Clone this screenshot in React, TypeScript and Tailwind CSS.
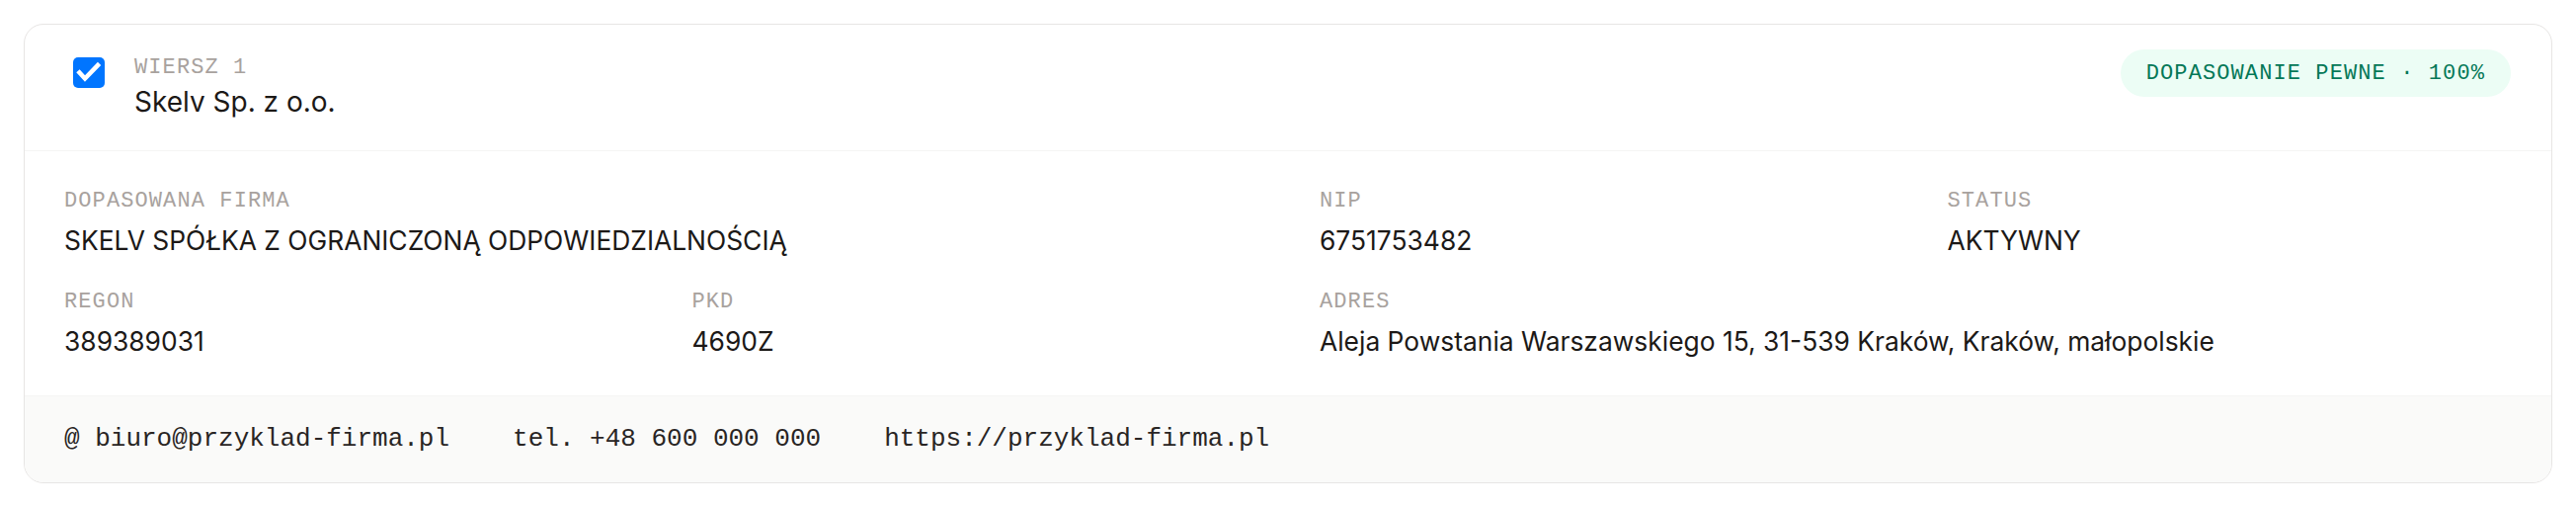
const mono = "font-['Liberation_Mono',monospace]";
const sans = "font-['Inter',sans-serif]";

function Label({ children }: { children: React.ReactNode }) {
  return (
    <div className={`${mono} text-[22px] leading-[28px] tracking-[1.1px] uppercase text-[#a8a29e]`}>
      {children}
    </div>
  );
}

function Value({ children }: { children: React.ReactNode }) {
  return <div className={`${sans} mt-[7px] text-[26.4px] leading-[36px] text-[#1c1917]`}>{children}</div>;
}

function Field({ label, value, span }: { label: string; value: string; span?: boolean }) {
  return (
    <div className={span ? "col-span-2" : ""}>
      <Label>{label}</Label>
      <Value>{value}</Value>
    </div>
  );
}

function CheckBox() {
  return (
    <div className="mt-[3px] flex h-[31px] w-[32px] shrink-0 items-center justify-center rounded-[5px] bg-[#0075ff]">
      <svg width="32" height="31" viewBox="0 0 32 31" fill="none">
        <path d="M6.5 15.5 L12 21.5 L25 8" stroke="white" strokeWidth="4.6" strokeLinecap="square" />
      </svg>
    </div>
  );
}

export default function App() {
  return (
    <div className="min-h-screen bg-white p-[24px]">
      <div className="overflow-hidden rounded-[20px] border border-[#e7e5e4] bg-white">
        {/* header */}
        <div className="flex h-[128px] items-start justify-between border-b border-[#f5f5f4] pl-[49px] pr-[41px] pt-[25px]">
          <div className="flex items-start gap-[30px] pt-[5px]">
            <CheckBox />
            <div>
              <Label>Wiersz 1</Label>
              <div className={`${sans} text-[28px] leading-[40px] text-[#1c1917]`}>Skelv Sp. z o.o.</div>
            </div>
          </div>
          <span
            className={`${mono} flex h-[48px] items-center rounded-full bg-[#ecfdf5] px-[26px] text-[22px] tracking-[1.1px] text-[#047857]`}
          >
            DOPASOWANIE PEWNE · 100%
          </span>
        </div>

        {/* details */}
        <div className="grid grid-cols-4 gap-x-[64px] gap-y-[31px] px-[40px] pb-[37px] pt-[37px]">
          <Field label="Dopasowana firma" value="SKELV SPÓŁKA Z OGRANICZONĄ ODPOWIEDZIALNOŚCIĄ" span />
          <Field label="NIP" value="6751753482" />
          <Field label="Status" value="AKTYWNY" />
          <Field label="Regon" value="389389031" />
          <Field label="PKD" value="4690Z" />
          <Field label="Adres" value="Aleja Powstania Warszawskiego 15, 31-539 Kraków, Kraków, małopolskie" span />
        </div>

        {/* contact */}
        <div
          className={`${mono} flex h-[88px] items-center gap-[64px] border-t border-[#f5f5f4] bg-[#fafaf9] px-[40px] text-[26px] text-[#292524]`}
        >
          <span>@ biuro@przyklad-firma.pl</span>
          <span>tel. +48 600 000 000</span>
          <span>https://przyklad-firma.pl</span>
        </div>
      </div>
    </div>
  );
}
